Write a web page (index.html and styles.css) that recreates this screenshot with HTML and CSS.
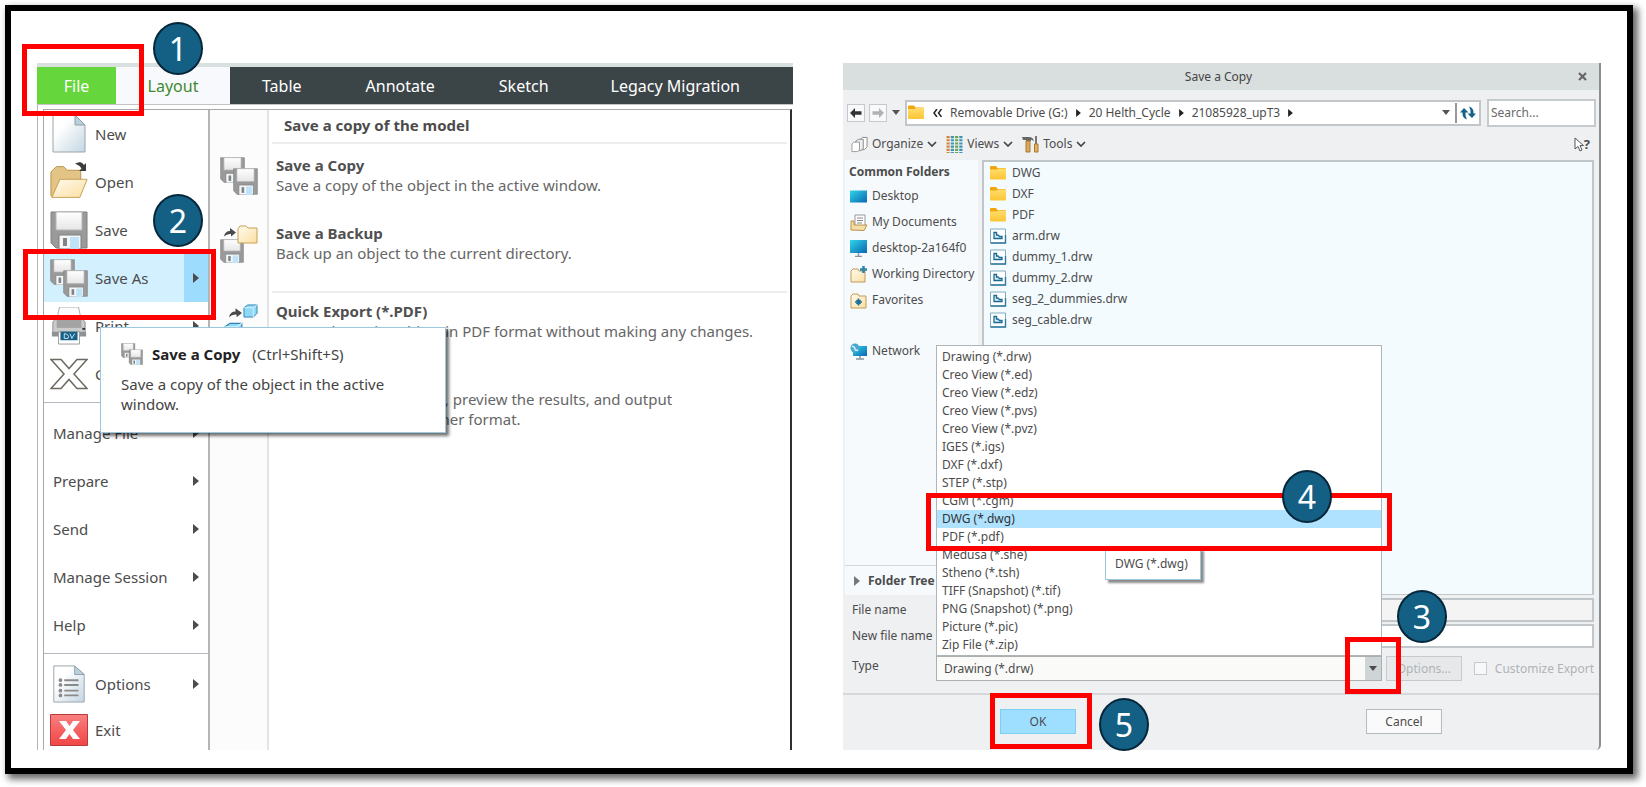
FILE: index.html
```
<!DOCTYPE html>
<html lang="en">
<head>
<meta charset="utf-8">
<title>Save a Copy as DWG</title>
<link rel="stylesheet" href="styles.css">
</head>
<body>
<svg class="defs" aria-hidden="true">
  <defs>
    <linearGradient id="g-page" x1="0" y1="0" x2="1" y2="1"><stop offset="0.3" stop-color="#fff"/><stop offset="1" stop-color="#c3d6e2"/></linearGradient>
    <linearGradient id="g-fold" x1="0" y1="0" x2="1" y2="1"><stop offset="0" stop-color="#fffaf0"/><stop offset="1" stop-color="#fbdf9f"/></linearGradient>
    <linearGradient id="g-yel" x1="0" y1="0" x2="0" y2="1"><stop offset="0" stop-color="#ffdd6e"/><stop offset="1" stop-color="#fdc534"/></linearGradient>
    <linearGradient id="g-scr" x1="0" y1="0" x2="1" y2="1"><stop offset="0" stop-color="#31d5e6"/><stop offset="1" stop-color="#0a67b5"/></linearGradient>
    <linearGradient id="g-red" x1="0" y1="0" x2="0" y2="1"><stop offset="0" stop-color="#f98080"/><stop offset="1" stop-color="#f04545"/></linearGradient>
    <linearGradient id="g-lab" x1="0" y1="0" x2="0" y2="1"><stop offset="0" stop-color="#fff"/><stop offset="1" stop-color="#e6e6e6"/></linearGradient>
    <symbol id="floppy" viewBox="0 0 38 38" preserveAspectRatio="none">
      <path d="M1 1h36v36H6l-5-5z" fill="#9a9a9a" stroke="#808080"/>
      <path d="M6 1h26v18H6z" fill="url(#g-lab)" stroke="#b5b5b5"/>
      <path d="M9 24h22v14H9z" fill="#f4f6f7" stroke="#7f7f7f"/>
      <path d="M20 26h9v12h-9z" fill="#bfe3f8"/>
      <path d="M13 27h4v8h-4z" fill="#7e8487"/>
    </symbol>
    <symbol id="copies" viewBox="0 0 38 38">
      <use href="#floppy" x="0" y="0" width="25" height="26"/>
      <use href="#floppy" x="13" y="11" width="25" height="27"/>
    </symbol>
    <symbol id="folder" viewBox="0 0 18 15">
      <path d="M1 1.5Q1 .5 2 .5h5l1.5 2H16q1 0 1 1V8H1z" fill="#f0a60c"/>
      <path d="M1 4h7l1-1h8v10q0 1-1 1H2q-1 0-1-1z" fill="url(#g-yel)"/>
    </symbol>
    <symbol id="drw" viewBox="0 0 17 16">
      <path d="M1 1h15v14H1z" fill="#fff" stroke="#7fabc0"/>
      <path d="M1 15h15V7" fill="none" stroke="#2f7a9a" stroke-width="1.4"/>
      <path d="M4.500 4.500v6h8V8.500H10L8.500 7H7V4.500z" fill="#d6ebf3" stroke="#1a6b91" stroke-width="1.300"/>
    </symbol>
    <symbol id="chev" viewBox="0 0 10 6"><path d="M1 1l4 4 4-4" fill="none" stroke="#444" stroke-width="1.700"/></symbol>
    <symbol id="tri" viewBox="0 0 6 10"><path d="M0 0l6 5-6 5z" fill="currentColor"/></symbol>
    <symbol id="down" viewBox="0 0 8 5"><path d="M0 0h8L4 5z" fill="currentColor"/></symbol>
    <symbol id="arrow" viewBox="0 0 12 10"><path d="M0 5l5-5v3.200h6.500v3.600H5V10z" fill="currentColor"/></symbol>
    <symbol id="swoop" viewBox="0 0 12 9"><path d="M0 8.500Q1 3 6 3V0l6 4.500L7 8.500V6Q3 5.500 0 8.500z" fill="#4a4a4a"/></symbol>
    <symbol id="cube" viewBox="0 0 16 15"><path d="M1 4l4-3h10v9l-4 4H1z" fill="#8fd8f8" stroke="#2d83ad"/><path d="M1 4h10v10M11 4l4-3" fill="none" stroke="#d8f3ff"/></symbol>
  </defs>
</svg>

<main class="frame">
  <section class="app" aria-label="File menu">
    <nav class="ribbon">
      <div class="anchor tab-file"><button class="tab file">File</button><i class="mark m1"></i><b class="step s1">1</b></div>
      <button class="tab layout">Layout</button>
      <button class="tab">Table</button>
      <button class="tab">Annotate</button>
      <button class="tab">Sketch</button>
      <button class="tab legacy">Legacy Migration</button>
    </nav>
    <div class="backstage">
      <div class="menus">
        <div class="menu">
          <button class="item"><svg class="ic" viewBox="0 0 38 38"><path d="M3 0h22l10 10v27H3z" fill="url(#g-page)" stroke="#9aa5ab"/><path d="M25 0v10h10z" fill="#b9d0dd" stroke="#8fa0aa"/></svg>New</button>
          <button class="item open"><svg class="ic" viewBox="0 0 42 38"><path d="M1 34V9q0-2 2-3l4-4h8l4 4h13q2 0 2 2v8L11 17 3 36z" fill="#e2c487" stroke="#b58e45"/><path d="M11 16h30L33 36H2z" fill="url(#g-fold)" stroke="#c39a4e"/></svg><svg class="open-arrow" viewBox="0 0 12 9"><path d="M0 1.500L5 0q3 1 4 3l2-2v8H4l2.500-2.500Q4 3 0 1.500z" fill="#3d3d3d"/></svg>Open</button>
          <div class="anchor"><button class="item"><svg class="ic"><use href="#floppy"/></svg>Save</button><b class="step s2">2</b></div>
          <div class="anchor"><button class="item current"><svg class="ic"><use href="#copies"/></svg>Save As<span class="fly"><svg class="tri"><use href="#tri"/></svg></span></button><i class="mark m2"></i>
            <div class="tip" role="tooltip">
              <p class="tip-head"><svg class="ic-s"><use href="#copies"/></svg><strong>Save a Copy</strong><span>(Ctrl+Shift+S)</span></p>
              <p>Save a copy of the object in the active window.</p>
            </div>
          </div>
          <button class="item"><svg class="ic" viewBox="0 0 38 40"><path d="M9 0h20l3 14H6z" fill="#fcfcfc" stroke="#aaa"/><path d="M2 16l4-5h26l4 5v14H2z" fill="#c9cbcc" stroke="#8c8c8c"/><path d="M6 12h26v10H6z" fill="#a3a3a3"/><path d="M1 26h36v5H1z" fill="#8f9293"/><path d="M33 23h3" stroke="#333" stroke-width="2"/><path d="M8 26h22v13H8z" fill="#fff" stroke="#9a9a9a"/><path d="M10 26h18v9H10z" fill="#176087"/><path d="M14 28v5h4q2-4-4-5M20 28l2 5 3-5" fill="none" stroke="#cde9f5"/></svg>Print<span class="fly"><svg class="tri"><use href="#tri"/></svg></span></button>
          <button class="item"><svg class="ic" viewBox="0 0 38 32"><path d="M1 1.500h10l8 9 8-9h10L24 16l13 14.500H27l-8-9-8 9H1L14 16z" fill="#fff" stroke="#6c6a60" stroke-width="1.500"/></svg>Close</button>
          <hr>
          <button class="item plain">Manage File<span class="fly"><svg class="tri"><use href="#tri"/></svg></span></button>
          <button class="item plain">Prepare<span class="fly"><svg class="tri"><use href="#tri"/></svg></span></button>
          <button class="item plain">Send<span class="fly"><svg class="tri"><use href="#tri"/></svg></span></button>
          <button class="item plain">Manage Session<span class="fly"><svg class="tri"><use href="#tri"/></svg></span></button>
          <button class="item plain">Help<span class="fly"><svg class="tri"><use href="#tri"/></svg></span></button>
          <hr>
          <button class="item"><svg class="ic" viewBox="0 0 38 40"><path d="M3 1h22l10 9v29H3z" fill="url(#g-page)" stroke="#98a4aa"/><path d="M25 1v9h10z" fill="#b9d0dd" stroke="#8fa0aa"/><path d="M14 16h15M14 21h15M14 27h15M14 32h15" stroke="#8a8a8a" stroke-width="2"/><path d="M10 16h0M10 21h0M10 27h0M10 32h0" stroke="#8a8a8a" stroke-width="4" stroke-linecap="round"/></svg>Options<span class="fly"><svg class="tri"><use href="#tri"/></svg></span></button>
          <button class="item last"><svg class="ic" viewBox="0 0 38 32"><path d="M.5.500h37v31H.500z" fill="url(#g-red)" stroke="#b93a3a"/><path d="M9 7h7l3.500 5L23 7h7l-7 9 7 9h-7l-3.500-5-3.500 5H9l7-9z" fill="#fff"/></svg>Exit</button>
        </div>
        <div class="sub">
          <h2>Save a copy of the model</h2>
          <a class="entry" href="#copy"><svg class="ic"><use href="#copies"/></svg><span><strong>Save a Copy</strong><span>Save a copy of the object in the active window.</span></span></a>
          <a class="entry" href="#backup"><svg class="ic" viewBox="0 0 38 38"><use href="#floppy" x="0" y="14" width="24" height="24"/><path d="M18 4l2-3h6l2 2h9v15H18z" fill="url(#g-fold)" stroke="#c7a259"/><use href="#swoop" x="4" y="3" width="12" height="9"/></svg><span><strong>Save a Backup</strong><span>Back up an object to the current directory.</span></span></a>
          <a class="entry ruled" href="#quick"><svg class="ic" viewBox="0 0 38 38"><use href="#swoop" x="9" y="5" width="13" height="10"/><use href="#cube" x="23" y="1" width="15" height="14"/><use href="#cube" x="4" y="19" width="19" height="18"/></svg><span><strong>Quick Export (*.PDF)</strong><span>Export the active object in PDF format without making any changes.</span></span></a>
          <a class="entry" href="#export"><svg class="ic" viewBox="0 0 38 38"><use href="#cube" x="4" y="10" width="19" height="18"/></svg><span><strong>Export</strong><span>Configure page settings, preview the results, and output<br>the drawing file to another format.</span></span></a>
        </div>
      </div>
    </div>
  </section>

  <section class="dialog" aria-label="Save a Copy">
    <header class="title"><h1>Save a Copy</h1><button class="close" aria-label="Close"><svg viewBox="0 0 9 9"><path d="M1 1l7 7M8 1L1 8" fill="none" stroke="#666" stroke-width="2.200"/></svg></button></header>
    <div class="nav">
      <button class="sq" aria-label="Back"><svg><use href="#arrow"/></svg></button>
      <button class="sq off" aria-label="Forward"><svg class="flip"><use href="#arrow"/></svg></button>
      <button class="bare" aria-label="History"><svg class="down"><use href="#down"/></svg></button>
      <div class="path">
        <svg class="fic"><use href="#folder"/></svg>
        <svg class="lag" viewBox="0 0 9 8"><path d="M4 0L1 4l3 4M8.500 0l-3 4 3 4" fill="none" stroke="#222" stroke-width="1.500"/></svg>
        <a href="#g">Removable Drive (G:)</a><svg class="tri dark"><use href="#tri"/></svg>
        <a href="#h">20 Helth_Cycle</a><svg class="tri dark"><use href="#tri"/></svg>
        <a href="#u">21085928_upT3</a><svg class="tri dark"><use href="#tri"/></svg>
        <button class="bare end" aria-label="Recent"><svg class="down"><use href="#down"/></svg></button>
        <button class="refresh" aria-label="Refresh"><svg viewBox="0 0 16 14"><path d="M7 13.500Q2 12 2.500 6.500H0L4 2l4.500 4.500H5.500q-.5 4 1.500 7zM9 .5q5 1.500 4.500 7H16L12 12 7.500 7.500h3Q11 3.500 9 .5z" fill="#136288"/></svg></button>
      </div>
      <input class="search" type="text" placeholder="Search..." aria-label="Search">
    </div>
    <div class="tools">
      <button class="tool"><svg viewBox="0 0 18 17"><path d="M9 4l3-3h5v10l-3 3H9z" fill="#fff" stroke="#888"/><path d="M5 5l3-2h5v10l-3 2H5z" fill="#eee" stroke="#888"/><path d="M1 8l2-2h6v8l-2 2H1z" fill="#fff" stroke="#999"/></svg>Organize<svg class="chev"><use href="#chev"/></svg></button>
      <button class="tool"><svg viewBox="0 0 16 16"><path d="M2 0v16" stroke="#d7863f" stroke-width="3" stroke-dasharray="2 1"/><path d="M6 0v16M14 0v16" stroke="#3d94b8" stroke-width="3" stroke-dasharray="2 1"/><path d="M10 0v16" stroke="#6aa84f" stroke-width="3" stroke-dasharray="2 1"/></svg>Views<svg class="chev"><use href="#chev"/></svg></button>
      <button class="tool"><svg viewBox="0 0 17 17"><path d="M0 1h7q4 0 5 4L9 3.500V5H4V4H1z" fill="#666"/><path d="M4 5h4v11H4z" fill="#dba95a" stroke="#a87831"/><path d="M14 0v8" stroke="#777" stroke-width="2"/><path d="M12.500 8h3.500v8h-3.500z" fill="#e3b161" stroke="#a87831"/></svg>Tools<svg class="chev"><use href="#chev"/></svg></button>
      <button class="help" aria-label="Context help"><svg viewBox="0 0 10 15"><path d="M1 1v11l3-2.500L6 14l2-1-2-4.500h3.500z" fill="#fff" stroke="#555"/></svg>?</button>
    </div>
    <div class="browse">
      <div class="side">
        <h2>Common Folders</h2>
        <a href="#1"><svg viewBox="0 0 18 15"><path d="M0 1.500h17v12H0z" fill="url(#g-scr)"/></svg>Desktop</a>
        <a href="#2"><svg viewBox="0 0 18 17"><path d="M5 1h10v12H5z" fill="#fff" stroke="#999"/><path d="M7 4h6M7 6.500h6M7 9h5" stroke="#888"/><path d="M1 16V7h3v4h13l-3 5.500z" fill="#f5dda6" stroke="#b9924b"/></svg>My Documents</a>
        <a href="#3"><svg viewBox="0 0 18 17"><path d="M0 0h17v13H0z" fill="url(#g-scr)"/><path d="M8.500 13v3M5 16.500h7" stroke="#8796a0" stroke-width="1.500"/></svg>desktop-2a164f0</a>
        <a href="#4"><svg viewBox="0 0 18 17"><path d="M1 5l2-2h5l1 2h6v11H1z" fill="url(#g-fold)" stroke="#c09c58"/><path d="M13.500 0v7M10 3.500h7" stroke="#2a86ab" stroke-width="2.500"/></svg>Working Directory</a>
        <a href="#5"><svg viewBox="0 0 18 17"><path d="M1 4l2-2h5l1 2h7v12H1z" fill="url(#g-fold)" stroke="#c09c58"/><path d="M8.500 6.500v7M5 10h7M6.500 8l4 4M10.500 8l-4 4" stroke="#1f7196" stroke-width="1.600"/></svg>Favorites</a>
        <a class="net" href="#6"><svg viewBox="0 0 18 17"><path d="M3 3h14v10H3z" fill="url(#g-scr)"/><circle cx="5" cy="5" r="4.500" fill="#4aa7cf"/><path d="M2 3q3 1 3 3t3 1" stroke="#d0f0fa" fill="none" stroke-width="1.500"/><path d="M10 13v3M6 16h8" stroke="#8796a0" stroke-width="1.500"/></svg>Network</a>
        <button class="tree"><svg class="tri grey"><use href="#tri"/></svg>Folder Tree</button>
      </div>
      <ul class="files">
        <li><svg><use href="#folder"/></svg>DWG</li>
        <li><svg><use href="#folder"/></svg>DXF</li>
        <li><svg><use href="#folder"/></svg>PDF</li>
        <li><svg><use href="#drw"/></svg>arm.drw</li>
        <li><svg><use href="#drw"/></svg>dummy_1.drw</li>
        <li><svg><use href="#drw"/></svg>dummy_2.drw</li>
        <li><svg><use href="#drw"/></svg>seg_2_dummies.drw</li>
        <li><svg><use href="#drw"/></svg>seg_cable.drw</li>
      </ul>
    </div>
    <form class="fields">
      <label for="fn">File name</label><input id="fn" type="text" disabled>
      <label for="nfn">New file name</label><input id="nfn" type="text">
      <label for="type">Type</label>
      <div class="type-row">
        <div class="anchor combo">
          <select id="type"><option>Drawing (*.drw)</option></select>
          <span class="drop"><svg class="down"><use href="#down"/></svg><i class="mark m3"></i><b class="step s3">3</b></span>
          <ul class="list">
            <li>Drawing (*.drw)</li><li>Creo View (*.ed)</li><li>Creo View (*.edz)</li><li>Creo View (*.pvs)</li><li>Creo View (*.pvz)</li><li>IGES (*.igs)</li><li>DXF (*.dxf)</li><li>STEP (*.stp)</li><li>CGM (*.cgm)</li>
            <li class="anchor sel">DWG (*.dwg)<span class="minitip" role="tooltip">DWG (*.dwg)</span><i class="mark m4"></i><b class="step s4">4</b></li>
            <li>PDF (*.pdf)</li><li>Medusa (*.she)</li><li>Stheno (*.tsh)</li><li>TIFF (Snapshot) (*.tif)</li><li>PNG (Snapshot) (*.png)</li><li>Picture (*.pic)</li><li>Zip File (*.zip)</li>
          </ul>
        </div>
        <button class="opt" type="button" disabled>Options...</button>
        <input id="ce" type="checkbox" disabled><label class="dim" for="ce">Customize Export</label>
      </div>
    </form>
    <footer class="actions">
      <div class="anchor"><button class="btn ok">OK</button><i class="mark m5"></i><b class="step s5">5</b></div>
      <button class="btn">Cancel</button>
    </footer>
  </section>
</main>
</body>
</html>
```
FILE: styles.css
```
* { box-sizing: border-box; }
body { margin: 0; background: #fff; font: 12px/18px "Noto Sans", "Open Sans", sans-serif; color: #4c4c4c; }
button, input, select { font: inherit; color: inherit; margin: 0; padding: 0; border: 0; background: none; border-radius: 0; }
a { color: inherit; text-decoration: none; }
h1, h2, p, ul { margin: 0; padding: 0; list-style: none; }
svg { display: block; flex: none; }
.defs { position: absolute; width: 0; height: 0; }
.anchor { position: relative; }

.frame { display: flex; gap: 50px; min-height: calc(100vh - 18px); margin: 5px 13px 13px 5px; padding: 52px 26px 18px; border: 6px solid #000; background: #fff; box-shadow: 4px 4px 7px 1px rgba(0, 0, 0, .6); }
.app, .dialog { flex: 1 1 0; min-width: 0; }

/* Callouts */
.mark { position: absolute; z-index: 6; border: 5px solid #f00; pointer-events: none; }
.step { position: absolute; z-index: 7; display: flex; align-items: center; justify-content: center; width: 50px; height: 53px; border: 2px solid #06263a; border-radius: 50%; background: #145f84; color: #fff; font-size: 32px; font-weight: 400; line-height: 40px; }
.m1 { inset: -23px -28px -12px -15px; }
.s1 { left: 116px; top: -45px; }
.s2 { left: 109px; top: -12px; }
.m2 { inset: -5px -8px -18px -21px; }
.m3 { inset: -20px -20px -14px -20px; }
.s3 { left: 32px; top: -67px; }
.m4 { inset: -17px -11px -23px -11px; }
.s4 { right: 49px; top: -40px; }
.m5 { inset: -16px -16px -15px -10px; }
.s5 { left: 99px; top: -11px; }

/* File menu */
.app { display: flex; flex-direction: column; }
.ribbon { display: flex; border-top: 4px solid #d9e0e0; background: #3b4548; }
.tab { flex: none; height: 37px; padding: 0 32px; color: #fff; font-size: 16px; }
.legacy { padding: 0 46px 0 30px; }
.tab.file { width: 79px; padding: 0; background: #65d63c; }
.tab.layout { width: 114px; padding: 0; background: #f8f9fc; color: #3e8a2e; }
.backstage { flex: 1; display: flex; padding: 4px 1px 0 5px; border-top: 1px solid #c3c3c3; border-left: 1px solid #b5b5b5; }
.menus { flex: 1; display: flex; border: 1px solid #a8a8a8; border-bottom: 0; border-right: 2px solid #2c3131; }
.menu { width: 166px; flex: none; border-right: 2px solid #b5b5b5; font-size: 15px; }
.menu hr { margin: 4px 0 6px; border: 0; border-top: 1px solid #b4b9c0; }
.item { position: relative; display: flex; align-items: center; width: 100%; height: 48px; padding-left: 6px; gap: 7px; text-align: left; white-space: nowrap; color: #4c4c4c; }
.item.plain { padding-left: 9px; }
.item.last { height: 38px; padding-top: 0; margin-top: 5px; height: 34px; }
.ic { width: 38px; height: 38px; }
.last .ic { height: 32px; }
.open-arrow { position: absolute; left: 31px; top: 4px; width: 12px; height: 9px; }
.fly { display: flex; align-items: center; justify-content: center; width: 24px; height: 48px; margin-left: auto; }
.tri { width: 6px; height: 10px; color: #4c4c4c; }
.current { background: #d3f0ff; }
.current .fly { background: #9edcfd; }
.sub { flex: 1; min-width: 0; background: linear-gradient(90deg, #fcfcfc 57px, #e3e3e3 57px, #e3e3e3 59px, #fff 59px); }
.sub h2 { height: 34px; margin: 0 3px 0 62px; padding: 4px 0 0 12px; border-bottom: 2px solid #ededed; font-size: 15px; line-height: 22px; }
.entry { display: flex; gap: 18px; min-height: 68px; padding: 11px 3px 0 10px; font-size: 15px; line-height: 20px; white-space: nowrap; color: #666; }
.entry .ic { width: 38px; margin-top: 2px; }
.entry strong, .entry span { display: block; }
.entry strong { color: #505050; }
.ruled { position: relative; margin-top: 10px; }
.ruled::before { content: ""; position: absolute; top: 1px; left: 62px; right: 3px; border-top: 2px solid #ededed; }
.tip { position: absolute; z-index: 5; left: 56px; top: 73px; width: 346px; min-height: 106px; padding: 15px 40px 16px 20px; border: 1px solid #9cc7dc; background: #fff; box-shadow: 3px 3px 3px rgba(0, 0, 0, .55); font-size: 15px; line-height: 20px; color: #444; }
.tip-head { display: flex; align-items: center; gap: 9px; margin-bottom: 9px; }
.tip-head strong { margin-right: 3px; color: #222; }
.ic-s { width: 22px; height: 22px; }

/* Save dialog */
.dialog { display: flex; flex-direction: column; border-right: 2px solid #8a8f92; border-bottom-right-radius: 5px; background: #eff0f2; }
.title { display: flex; align-items: center; height: 27px; padding: 0 12px 0 6px; background: #d9dede; }
.title h1 { flex: 1; padding-left: 10px; font-size: 12px; font-weight: 400; text-align: center; color: #444; }
.close svg { width: 9px; height: 9px; }
.nav { display: flex; align-items: center; gap: 4px; height: 45px; padding: 0 3px 0 4px; }
.sq { display: flex; align-items: center; justify-content: center; width: 18px; height: 18px; border: 1px solid #c4c9cc; background: #f8f9fa; color: #333; }
.sq svg { width: 12px; height: 10px; }
.off { color: #b0b3b5; }
.flip { transform: rotate(180deg); }
.bare { display: flex; padding: 0 1px; color: #555; }
.down { width: 8px; height: 5px; }
.path { flex: 1; display: flex; align-items: center; gap: 8px; height: 26px; border: 2px solid #c0c6c9; background: #fff; }
.fic { width: 18px; height: 15px; }
.lag { width: 9px; height: 8px; }
.path .tri { width: 5px; height: 8px; color: #222; }
.end { margin-left: auto; }
.refresh { margin-left: -4px; padding: 3px; border-left: 2px solid #999; }
.refresh svg { width: 16px; height: 14px; }
.search { width: 109px; height: 28px; margin-left: 2px; padding: 0 2px; border: 2px solid #c5cacc; background: #fff; }
.search::placeholder { color: #6a6a6a; opacity: 1; }
.tools { display: flex; gap: 9px; height: 25px; padding: 0 9px 0 8px; align-items: flex-start; }
.tool { display: flex; align-items: center; gap: 4px; height: 18px; }
.tool svg { width: 17px; height: 17px; }
.tool .chev { width: 10px; height: 6px; }
.help { display: flex; align-items: center; margin-left: auto; font-size: 13px; font-weight: 700; }
.help svg { width: 10px; height: 15px; }
.browse { flex: 1; display: flex; gap: 4px; padding: 0 5px 0 2px; }
.side { width: 133px; flex: none; display: flex; flex-direction: column; background: #f7fafc; }
.side h2 { padding: 3px 4px 2px; font-size: 12px; line-height: 18px; }
.side a { display: flex; align-items: center; gap: 4px; min-height: 26px; padding-left: 5px; white-space: nowrap; }
.side a svg { width: 18px; height: 17px; }
.side .net { margin-top: 25px; }
.tree { display: flex; align-items: center; gap: 8px; height: 30px; margin-top: auto; padding-left: 9px; border-top: 1px solid #d5d8da; font-weight: 700; }
.tree .tri { color: #777; }
.files { flex: 1; padding: 0 5px; border: 2px solid #c0c6c9; border-bottom-width: 1px; background: #f3fbff; }
.files li { display: flex; align-items: center; gap: 5px; line-height: 21px; min-height: 21px; }
.files svg { width: 18px; height: 16px; }
.fields { display: grid; grid-template-columns: 84px 1fr; gap: 2px 0; align-items: center; padding: 3px 5px 12px 9px; border-bottom: 2px solid #d5d8da; }
.fields > label { white-space: nowrap; }
.fields > input { width: 100%; height: 24px; border: 2px solid #c0c6c9; background: #fff; }
.fields > input:disabled { background: #f4f4f4; }
.type-row { display: flex; align-items: center; margin-top: 6px; }
.combo { flex: 1; display: flex; height: 25px; margin-right: 4px; border: 1px solid #aaafb2; background: #fafaf9; }
.combo select { flex: 1; appearance: none; padding-left: 7px; }
.drop { position: relative; display: flex; align-items: center; justify-content: center; width: 16px; background: #cfd4d6; }
.list { position: absolute; z-index: 4; left: -1px; right: -1px; bottom: 24px; padding: 2px 0 1px; border: 1px solid #b0b5b8; background: #fff; }
.list li { padding-left: 5px; line-height: 18px; height: 18px; }
.list .sel { background: #aee2ff; color: #333; }
.minitip { position: absolute; z-index: 5; left: 168px; top: 38px; padding: 6px 12px 6px 9px; border: 1px solid #9cc7dc; background: #fff; box-shadow: 3px 3px 2px rgba(0, 0, 0, .45); color: #4c4c4c; }
.opt { width: 76px; height: 25px; border: 1px solid #c5cacd; background: #e6e8ea; color: #b0b3b5; }
#ce { appearance: none; width: 13px; height: 13px; margin: 0 8px 0 12px; border: 1px solid #c5cacd; background: #f7f8f9; }
.dim { color: #b0b3b5; white-space: nowrap; }
.actions { display: flex; justify-content: space-between; padding: 14px 157px 16px; }
.btn { width: 76px; height: 25px; border: 1px solid #b5babd; background: #fafafa; }
.ok { border-color: #7dcdf5; background: #9edfff; }
```
